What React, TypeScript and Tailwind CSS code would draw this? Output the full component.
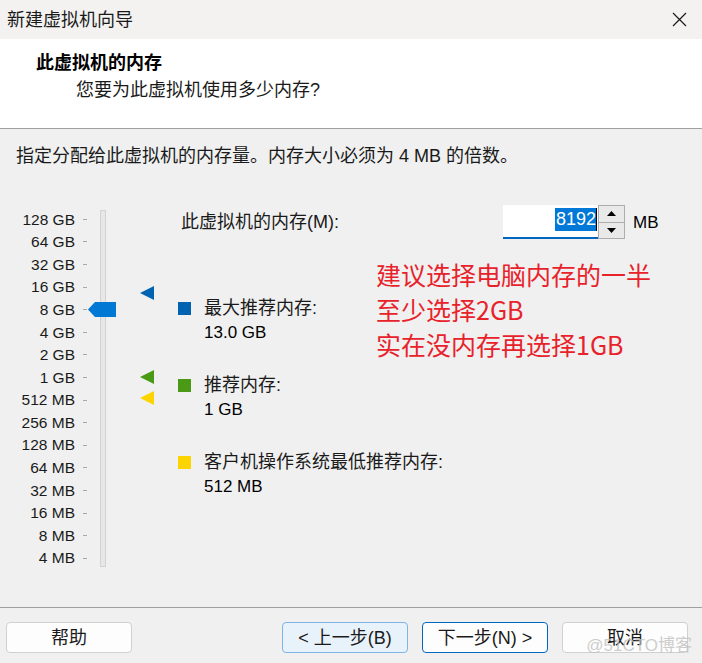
import React from 'react';

const sizes = [
  '128 GB', '64 GB', '32 GB', '16 GB', '8 GB', '4 GB', '2 GB', '1 GB',
  '512 MB', '256 MB', '128 MB', '64 MB', '32 MB', '16 MB', '8 MB', '4 MB',
];

const legend = [
  { color: 'bg-[#0063b1]', label: '最大推荐内存:', value: '13.0 GB' },
  { color: 'bg-[#4a9a16]', label: '推荐内存:', value: '1 GB' },
  { color: 'bg-[#fcd500]', label: '客户机操作系统最低推荐内存:', value: '512 MB' },
];

const Marker = ({ color, top }: { color: string; top: string }) => (
  <svg className={`absolute left-[140px] ${top}`} width="14" height="14" viewBox="0 0 14 14">
    <polygon points="0,7 14,0 14,14" fill={color} />
  </svg>
);

export default function App() {
  return (
    <div className="relative w-[702px] h-[663px] flex flex-col overflow-hidden bg-[#f0f0f0] text-black font-['Liberation_Sans','Noto_Sans_CJK_SC',sans-serif]">
      {/* title bar */}
      <div className="h-[39px] shrink-0 flex items-center justify-between bg-[#f3f2f1] pl-[7px] pr-[15px]">
        <span className="text-[18px] leading-none text-[#1a1a1a]">新建虚拟机向导</span>
        <svg width="15" height="15" viewBox="0 0 15 15" stroke="#1a1a1a" strokeWidth="1.2">
          <path d="M1 1L14 14M14 1L1 14" />
        </svg>
      </div>

      {/* header */}
      <div className="h-[90px] shrink-0 bg-white border-b border-[#a0a0a0] pl-[36px] pt-[12px]">
        <div className="text-[18px] leading-[24px] font-bold">此虚拟机的内存</div>
        <div className="text-[18px] leading-[24px] pl-[40px] mt-[3px] text-[#1a1a1a]">您要为此虚拟机使用多少内存?</div>
      </div>

      {/* content */}
      <div className="flex-1 flex flex-col pt-[15px]">
        <div className="pl-[16px] text-[18px] leading-[24px] text-[#1a1a1a]">
          指定分配给此虚拟机的内存量。内存大小必须为 4 MB 的倍数。
        </div>

        <div className="relative flex mt-[37px]">
          {/* slider */}
          <div className="relative w-[178px] shrink-0 flex">
            <div className="w-[87px] flex flex-col pt-[3px]">
              {sizes.map((s) => (
                <div key={s} className="h-[22.6px] flex items-center">
                  <span className="flex-1 text-right text-[15.5px] leading-none text-[#1a1a1a]">{s}</span>
                  <span className="ml-[8px] w-[4px] h-[1px] bg-[#a8a8a8]" />
                </div>
              ))}
            </div>
            <div className="ml-[13px] mt-[5px] w-[6px] h-[357px] border border-[#d2d2d2] bg-[#e7e7e7]" />
            <svg className="absolute left-[88px] top-[97px]" width="28" height="15" viewBox="0 0 28 15">
              <polygon points="0,7.5 7,0 28,0 28,15 7,15" fill="#0078d4" />
            </svg>
            <Marker color="#0063b1" top="top-[81px]" />
            <Marker color="#4a9a16" top="top-[165px]" />
            <Marker color="#fcd500" top="top-[186px]" />
          </div>

          {/* right panel */}
          <div className="flex flex-col">
            <div className="h-[34px] flex items-center">
              <span className="w-[325px] pl-[3px] text-[18px] leading-none text-[#1a1a1a]">此虚拟机的内存(M):</span>
              <div className="w-[95px] h-[34px] bg-white border-b-2 border-[#0067c0] flex items-start justify-end pt-[3px] pr-[1px]">
                <span className="bg-[#0078d7] text-white text-[18px] leading-[23px] pl-[1px]">8192</span>
                <span className="w-[1px] h-[23px] bg-black" />
              </div>
              <div className="w-[27px] h-[34px] border border-[#adadad] bg-[#e9e9e9] flex flex-col">
                <div className="flex-1 flex items-center justify-center border-b border-[#adadad]">
                  <svg width="9" height="5" viewBox="0 0 9 5"><polygon points="0,5 4.5,0 9,5" fill="#000" /></svg>
                </div>
                <div className="flex-1 flex items-center justify-center">
                  <svg width="9" height="5" viewBox="0 0 9 5"><polygon points="0,0 9,0 4.5,5" fill="#000" /></svg>
                </div>
              </div>
              <span className="ml-[8px] text-[17px] leading-none">MB</span>
            </div>

            <div className="mt-[57px] flex flex-col gap-[29px]">
              {legend.map((l) => (
                <div key={l.label} className="flex flex-col">
                  <div className="h-[24px] flex items-center">
                    <span className={`w-[13px] h-[13px] mr-[13px] ${l.color}`} />
                    <span className="text-[18px] leading-none text-[#1a1a1a]">{l.label}</span>
                  </div>
                  <div className="h-[24px] pl-[26px] flex items-center text-[17px] leading-none text-black">
                    {l.value}
                  </div>
                </div>
              ))}
            </div>
          </div>

          {/* annotation */}
          <div className="absolute left-[376px] top-[52px] text-[25px] leading-[35px] text-[#e8222b] font-['Noto_Sans_CJK_SC',sans-serif]">
            <div>建议选择电脑内存的一半</div>
            <div>至少选择2GB</div>
            <div>实在没内存再选择1GB</div>
          </div>
        </div>
      </div>

      {/* footer */}
      <div className="h-[56px] shrink-0 border-t border-[#a0a0a0] flex justify-between pt-[14px] pl-[6px] pr-[14px]">
        <button className="w-[126px] h-[31px] rounded-[4px] border border-[#d0d0d0] bg-[#fdfdfd] text-[18px] leading-none text-[#1a1a1a]">帮助</button>
        <div className="flex gap-[14px]">
          <button className="w-[126px] h-[31px] rounded-[4px] border border-[#7eb4ea] bg-[#e8f2fb] text-[18px] leading-none text-[#1a1a1a]">&lt; 上一步(B)</button>
          <button className="w-[126px] h-[31px] rounded-[4px] border border-[#0067c0] bg-[#fdfdfd] text-[18px] leading-none text-[#1a1a1a]">下一步(N) &gt;</button>
          <button className="w-[126px] h-[31px] rounded-[4px] border border-[#d0d0d0] bg-[#fdfdfd] text-[18px] leading-none text-[#1a1a1a]">取消</button>
        </div>
      </div>

      {/* watermark */}
      <div className="absolute right-[10px] bottom-[9px] text-[17px] leading-none text-[#c2c2c2] opacity-80">@51CTO博客</div>
    </div>
  );
}
